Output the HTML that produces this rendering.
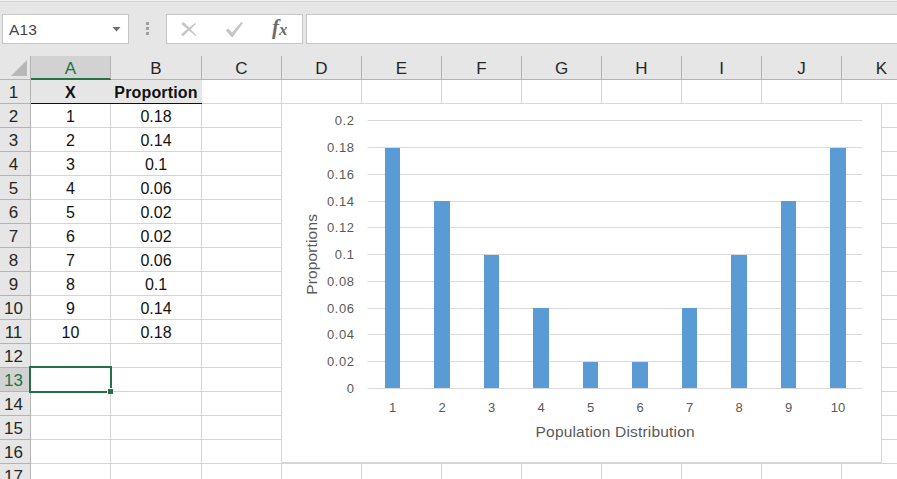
<!DOCTYPE html>
<html><head><meta charset="utf-8"><title>Population Distribution</title>
<style>
html,body{margin:0;padding:0;}
body{width:897px;height:479px;overflow:hidden;position:relative;background:#e6e6e6;font-family:"Liberation Sans",sans-serif;color:#222;}
div,span,svg{position:absolute;box-sizing:border-box;}
.box{background:#fff;border:1px solid #c6c6c6;}
.ch{top:56px;height:23px;line-height:26px;text-align:center;font-size:17px;color:#262626;}
.rh{left:0;width:27px;height:23px;line-height:26px;text-align:center;font-size:17px;color:#262626;}
.vl{width:1px;background:#d4d4d4;}
.hl{height:1px;background:#d4d4d4;}
.c{height:23px;line-height:25px;text-align:center;font-size:16px;color:#111;white-space:nowrap;}
.b{font-weight:bold;letter-spacing:0.15px;}
</style></head><body>

<div style="left:0;top:0;width:897px;height:1px;background:#f1f1f1"></div>
<div style="left:0;top:1px;width:897px;height:1px;background:#d2d2d2"></div>
<div class="box" style="left:2px;top:14px;width:127px;height:30px"></div>
<div style="left:9px;top:14px;height:30px;line-height:31px;font-size:15.5px;letter-spacing:0.2px;color:#444">A13</div>
<svg style="left:112px;top:27px" width="9" height="5" viewBox="0 0 9 5"><path d="M0.5 0h8L4.5 4.5z" fill="#6e6e6e"/></svg>
<div style="left:146px;top:22px;width:3px;height:3px;background:#a0a0a0"></div>
<div style="left:146px;top:27px;width:3px;height:3px;background:#a0a0a0"></div>
<div style="left:146px;top:32px;width:3px;height:3px;background:#a0a0a0"></div>
<div class="box" style="left:166px;top:14px;width:137px;height:30px"></div>
<svg style="left:178px;top:20px" width="22" height="18" viewBox="178 20 22 18"><path d="M181.2 24 L183.4 22 L189.2 27.6 L195.4 22.9 L196.2 23.8 L190.6 29.2 L196.5 35.4 L195.6 36.1 L189 30.6 L183.2 36.2 L181 34.4 L187.4 29 Z" fill="#c6c6c6"/></svg>
<svg style="left:223px;top:20px" width="24" height="18" viewBox="223 20 24 18"><path d="M225.7 30.6 L228.3 28.6 L232 32.6 L241.2 22 L243 23 L232.8 37 L231.6 37 Z" fill="#c6c6c6"/></svg>
<div style="left:272px;top:13px;height:30px;line-height:29px;font-family:'Liberation Serif',serif;font-style:italic;font-weight:bold;font-size:21px;color:#6c6c6c;white-space:nowrap">f<span style="position:relative;font-size:17px;top:1px">x</span></div>
<div class="box" style="left:306px;top:14px;width:600px;height:30px"></div>
<div style="left:31px;top:80px;width:866px;height:399px;background:#fff"></div>
<div style="left:0;top:79px;width:897px;height:1px;background:#b4b4b4"></div>
<div style="left:30px;top:56px;width:1px;height:423px;background:#b4b4b4"></div>
<svg style="left:11px;top:60px" width="16" height="16" viewBox="0 0 16 16"><path d="M16 0V16H0z" fill="#b8b8b8"/></svg>
<div style="left:31px;top:56px;width:80px;height:22px;background:#d2d2d2"></div>
<div style="left:31px;top:78px;width:80px;height:2px;background:#217346"></div>
<div class="ch" style="left:31px;width:79px;color:#217346">A</div>
<div style="left:110px;top:56px;width:1px;height:23px;background:#b4b4b4"></div>
<div class="ch" style="left:111px;width:90px;color:#262626">B</div>
<div style="left:201px;top:56px;width:1px;height:23px;background:#b4b4b4"></div>
<div class="ch" style="left:202px;width:79px;color:#262626">C</div>
<div style="left:281px;top:56px;width:1px;height:23px;background:#b4b4b4"></div>
<div class="ch" style="left:282px;width:79px;color:#262626">D</div>
<div style="left:361px;top:56px;width:1px;height:23px;background:#b4b4b4"></div>
<div class="ch" style="left:362px;width:79px;color:#262626">E</div>
<div style="left:441px;top:56px;width:1px;height:23px;background:#b4b4b4"></div>
<div class="ch" style="left:442px;width:79px;color:#262626">F</div>
<div style="left:521px;top:56px;width:1px;height:23px;background:#b4b4b4"></div>
<div class="ch" style="left:522px;width:79px;color:#262626">G</div>
<div style="left:601px;top:56px;width:1px;height:23px;background:#b4b4b4"></div>
<div class="ch" style="left:602px;width:79px;color:#262626">H</div>
<div style="left:681px;top:56px;width:1px;height:23px;background:#b4b4b4"></div>
<div class="ch" style="left:682px;width:79px;color:#262626">I</div>
<div style="left:761px;top:56px;width:1px;height:23px;background:#b4b4b4"></div>
<div class="ch" style="left:762px;width:79px;color:#262626">J</div>
<div style="left:841px;top:56px;width:1px;height:23px;background:#b4b4b4"></div>
<div class="ch" style="left:842px;width:79px;color:#262626">K</div>
<div style="left:921px;top:56px;width:1px;height:23px;background:#b4b4b4"></div>
<div class="vl" style="left:110px;top:80px;height:399px"></div>
<div class="vl" style="left:201px;top:80px;height:399px"></div>
<div class="vl" style="left:281px;top:80px;height:399px"></div>
<div class="vl" style="left:361px;top:80px;height:399px"></div>
<div class="vl" style="left:441px;top:80px;height:399px"></div>
<div class="vl" style="left:521px;top:80px;height:399px"></div>
<div class="vl" style="left:601px;top:80px;height:399px"></div>
<div class="vl" style="left:681px;top:80px;height:399px"></div>
<div class="vl" style="left:761px;top:80px;height:399px"></div>
<div class="vl" style="left:841px;top:80px;height:399px"></div>
<div class="vl" style="left:921px;top:80px;height:399px"></div>
<div class="rh" style="top:80px;color:#262626">1</div>
<div style="left:0;top:103px;width:30px;height:1px;background:#b4b4b4"></div>
<div class="hl" style="left:31px;top:103px;width:866px"></div>
<div class="rh" style="top:104px;color:#262626">2</div>
<div style="left:0;top:127px;width:30px;height:1px;background:#b4b4b4"></div>
<div class="hl" style="left:31px;top:127px;width:866px"></div>
<div class="rh" style="top:128px;color:#262626">3</div>
<div style="left:0;top:151px;width:30px;height:1px;background:#b4b4b4"></div>
<div class="hl" style="left:31px;top:151px;width:866px"></div>
<div class="rh" style="top:152px;color:#262626">4</div>
<div style="left:0;top:175px;width:30px;height:1px;background:#b4b4b4"></div>
<div class="hl" style="left:31px;top:175px;width:866px"></div>
<div class="rh" style="top:176px;color:#262626">5</div>
<div style="left:0;top:199px;width:30px;height:1px;background:#b4b4b4"></div>
<div class="hl" style="left:31px;top:199px;width:866px"></div>
<div class="rh" style="top:200px;color:#262626">6</div>
<div style="left:0;top:223px;width:30px;height:1px;background:#b4b4b4"></div>
<div class="hl" style="left:31px;top:223px;width:866px"></div>
<div class="rh" style="top:224px;color:#262626">7</div>
<div style="left:0;top:247px;width:30px;height:1px;background:#b4b4b4"></div>
<div class="hl" style="left:31px;top:247px;width:866px"></div>
<div class="rh" style="top:248px;color:#262626">8</div>
<div style="left:0;top:271px;width:30px;height:1px;background:#b4b4b4"></div>
<div class="hl" style="left:31px;top:271px;width:866px"></div>
<div class="rh" style="top:272px;color:#262626">9</div>
<div style="left:0;top:295px;width:30px;height:1px;background:#b4b4b4"></div>
<div class="hl" style="left:31px;top:295px;width:866px"></div>
<div class="rh" style="top:296px;color:#262626">10</div>
<div style="left:0;top:319px;width:30px;height:1px;background:#b4b4b4"></div>
<div class="hl" style="left:31px;top:319px;width:866px"></div>
<div class="rh" style="top:320px;color:#262626">11</div>
<div style="left:0;top:343px;width:30px;height:1px;background:#b4b4b4"></div>
<div class="hl" style="left:31px;top:343px;width:866px"></div>
<div class="rh" style="top:344px;color:#262626">12</div>
<div style="left:0;top:367px;width:30px;height:1px;background:#b4b4b4"></div>
<div class="hl" style="left:31px;top:367px;width:866px"></div>
<div style="left:0;top:368px;width:30px;height:23px;background:#d2d2d2"></div>
<div class="rh" style="top:368px;color:#217346">13</div>
<div style="left:0;top:391px;width:30px;height:1px;background:#b4b4b4"></div>
<div class="hl" style="left:31px;top:391px;width:866px"></div>
<div class="rh" style="top:392px;color:#262626">14</div>
<div style="left:0;top:415px;width:30px;height:1px;background:#b4b4b4"></div>
<div class="hl" style="left:31px;top:415px;width:866px"></div>
<div class="rh" style="top:416px;color:#262626">15</div>
<div style="left:0;top:439px;width:30px;height:1px;background:#b4b4b4"></div>
<div class="hl" style="left:31px;top:439px;width:866px"></div>
<div class="rh" style="top:440px;color:#262626">16</div>
<div style="left:0;top:463px;width:30px;height:1px;background:#b4b4b4"></div>
<div class="hl" style="left:31px;top:463px;width:866px"></div>
<div class="rh" style="top:464px;color:#262626">17</div>
<div style="left:0;top:487px;width:30px;height:1px;background:#b4b4b4"></div>
<div class="hl" style="left:31px;top:487px;width:866px"></div>
<div style="left:31px;top:80px;width:171px;height:23px;background:#e6e6e6"></div>
<div style="left:31px;top:103px;width:171px;height:1px;background:#111"></div>
<div class="c b" style="left:31px;top:80px;width:79px">X</div>
<div class="c b" style="left:111px;top:80px;width:90px">Proportion</div>
<div class="c" style="left:31px;top:104px;width:79px">1</div>
<div class="c" style="left:111px;top:104px;width:90px">0.18</div>
<div class="c" style="left:31px;top:128px;width:79px">2</div>
<div class="c" style="left:111px;top:128px;width:90px">0.14</div>
<div class="c" style="left:31px;top:152px;width:79px">3</div>
<div class="c" style="left:111px;top:152px;width:90px">0.1</div>
<div class="c" style="left:31px;top:176px;width:79px">4</div>
<div class="c" style="left:111px;top:176px;width:90px">0.06</div>
<div class="c" style="left:31px;top:200px;width:79px">5</div>
<div class="c" style="left:111px;top:200px;width:90px">0.02</div>
<div class="c" style="left:31px;top:224px;width:79px">6</div>
<div class="c" style="left:111px;top:224px;width:90px">0.02</div>
<div class="c" style="left:31px;top:248px;width:79px">7</div>
<div class="c" style="left:111px;top:248px;width:90px">0.06</div>
<div class="c" style="left:31px;top:272px;width:79px">8</div>
<div class="c" style="left:111px;top:272px;width:90px">0.1</div>
<div class="c" style="left:31px;top:296px;width:79px">9</div>
<div class="c" style="left:111px;top:296px;width:90px">0.14</div>
<div class="c" style="left:31px;top:320px;width:79px">10</div>
<div class="c" style="left:111px;top:320px;width:90px">0.18</div>
<div style="left:29px;top:366px;width:83px;height:27px;border:2px solid #217346"></div>
<div style="left:107px;top:388px;background:#217346;border-left:1px solid #fff;border-top:1px solid #fff;box-sizing:content-box;width:5px;height:5px"></div>
<div style="left:281px;top:103px;width:601px;height:360px;background:#fff;border:1px solid #d9d9d9"></div>
<svg style="left:281px;top:103px" width="601" height="360" viewBox="281 103 601 360" font-family="Liberation Sans, sans-serif" fill="#595959">
<line x1="367.5" x2="862.5" y1="388.5" y2="388.5" stroke="#d9d9d9" stroke-width="1"/>
<text x="354.6" y="393" text-anchor="end" font-size="13" letter-spacing="0.6">0</text>
<line x1="367.5" x2="862.5" y1="361.5" y2="361.5" stroke="#d9d9d9" stroke-width="1"/>
<text x="354.6" y="366" text-anchor="end" font-size="13" letter-spacing="0.6">0.02</text>
<line x1="367.5" x2="862.5" y1="334.5" y2="334.5" stroke="#d9d9d9" stroke-width="1"/>
<text x="354.6" y="339" text-anchor="end" font-size="13" letter-spacing="0.6">0.04</text>
<line x1="367.5" x2="862.5" y1="308.5" y2="308.5" stroke="#d9d9d9" stroke-width="1"/>
<text x="354.6" y="313" text-anchor="end" font-size="13" letter-spacing="0.6">0.06</text>
<line x1="367.5" x2="862.5" y1="281.5" y2="281.5" stroke="#d9d9d9" stroke-width="1"/>
<text x="354.6" y="286" text-anchor="end" font-size="13" letter-spacing="0.6">0.08</text>
<line x1="367.5" x2="862.5" y1="254.5" y2="254.5" stroke="#d9d9d9" stroke-width="1"/>
<text x="354.6" y="259" text-anchor="end" font-size="13" letter-spacing="0.6">0.1</text>
<line x1="367.5" x2="862.5" y1="227.5" y2="227.5" stroke="#d9d9d9" stroke-width="1"/>
<text x="354.6" y="232" text-anchor="end" font-size="13" letter-spacing="0.6">0.12</text>
<line x1="367.5" x2="862.5" y1="201.5" y2="201.5" stroke="#d9d9d9" stroke-width="1"/>
<text x="354.6" y="206" text-anchor="end" font-size="13" letter-spacing="0.6">0.14</text>
<line x1="367.5" x2="862.5" y1="174.5" y2="174.5" stroke="#d9d9d9" stroke-width="1"/>
<text x="354.6" y="179" text-anchor="end" font-size="13" letter-spacing="0.6">0.16</text>
<line x1="367.5" x2="862.5" y1="147.5" y2="147.5" stroke="#d9d9d9" stroke-width="1"/>
<text x="354.6" y="152" text-anchor="end" font-size="13" letter-spacing="0.6">0.18</text>
<line x1="367.5" x2="862.5" y1="120.5" y2="120.5" stroke="#d9d9d9" stroke-width="1"/>
<text x="354.6" y="125" text-anchor="end" font-size="13" letter-spacing="0.6">0.2</text>
<rect x="385" y="148" width="15" height="240" fill="#5b9bd5"/>
<text x="392.5" y="412" text-anchor="middle" font-size="13">1</text>
<rect x="434" y="201" width="16" height="187" fill="#5b9bd5"/>
<text x="442.0" y="412" text-anchor="middle" font-size="13">2</text>
<rect x="484" y="255" width="15" height="133" fill="#5b9bd5"/>
<text x="491.5" y="412" text-anchor="middle" font-size="13">3</text>
<rect x="533" y="308" width="16" height="80" fill="#5b9bd5"/>
<text x="541.0" y="412" text-anchor="middle" font-size="13">4</text>
<rect x="583" y="362" width="15" height="26" fill="#5b9bd5"/>
<text x="590.5" y="412" text-anchor="middle" font-size="13">5</text>
<rect x="632" y="362" width="16" height="26" fill="#5b9bd5"/>
<text x="640.0" y="412" text-anchor="middle" font-size="13">6</text>
<rect x="682" y="308" width="15" height="80" fill="#5b9bd5"/>
<text x="689.5" y="412" text-anchor="middle" font-size="13">7</text>
<rect x="731" y="255" width="16" height="133" fill="#5b9bd5"/>
<text x="739.0" y="412" text-anchor="middle" font-size="13">8</text>
<rect x="781" y="201" width="15" height="187" fill="#5b9bd5"/>
<text x="788.5" y="412" text-anchor="middle" font-size="13">9</text>
<rect x="830" y="148" width="16" height="240" fill="#5b9bd5"/>
<text x="838.0" y="412" text-anchor="middle" font-size="13">10</text>
<text x="615.2" y="437" text-anchor="middle" font-size="15.5" letter-spacing="0.18">Population Distribution</text>
<text transform="translate(316.9,254.4) rotate(-90)" text-anchor="middle" font-size="15.5" letter-spacing="0.15">Proportions</text>
</svg>
</body></html>
